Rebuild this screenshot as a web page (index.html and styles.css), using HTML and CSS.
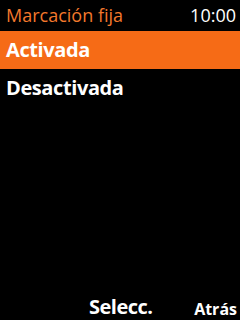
FILE: index.html
```html
<!DOCTYPE html>
<html>
<head lang="es">
    <meta charset="UTF-8">
    <title>Marcación fija</title>
    <link rel="stylesheet" href="styles.css">
</head>
<body>
    <div class="screen">
        <div class="top">
            <span class="title">Marcación fija</span>
            <span class="clock">10:00</span>
        </div>
        <ul class="menu">
            <li class="current">Activada</li>
            <li>Desactivada</li>
        </ul>
        <div class="keys">
            <span class="mid">Selecc.</span>
            <span class="right">Atrás</span>
        </div>
    </div>
</body>
</html>
```

FILE: styles.css
```css
body, ul, li {
    margin: 0;
    padding: 0;
    list-style: none;
}

body {
    background: #000;
    font-family: "Open Sans", "DejaVu Sans", sans-serif;
    color: #fff;
}

.screen {
    width: 240px;
    height: 320px;
    display: flex;
    flex-direction: column;
    overflow: hidden;
}

.top {
    height: 31px;
    display: flex;
    justify-content: space-between;
    align-items: center;
    padding: 0 4px 2px 6px;
    font-size: 18px;
    box-sizing: border-box;
}

.title {
    color: #f3782c;
}

.menu {
    flex: 1;
}

.menu li {
    height: 38px;
    line-height: 38px;
    padding-left: 6px;
    font-size: 20px;
    font-weight: bold;
    letter-spacing: -0.4px;
}

.menu li.current {
    background: #f66b16;
}

.keys {
    height: 30px;
    display: flex;
    align-items: flex-end;
    padding-bottom: 1px;
    font-weight: bold;
}

.keys .mid {
    margin-left: 89px;
    font-size: 20px;
    letter-spacing: -0.5px;
    line-height: 24px;
}

.keys .right {
    margin-left: auto;
    margin-right: 3px;
    font-size: 16px;
    line-height: 20px;
}
```
